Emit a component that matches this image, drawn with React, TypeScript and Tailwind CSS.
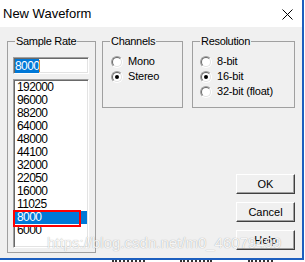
const rates = ["192000", "96000", "88200", "64000", "48000", "44100", "32000", "22050", "16000", "11025", "8000", "6000"];

function Radio({ checked }: { checked?: boolean }) {
  return (
    <span className="flex h-[12px] w-[12px] shrink-0 rounded-full border border-t-[#a0a0a0] border-l-[#a0a0a0] border-b-white border-r-white">
      <span className="flex flex-1 items-center justify-center rounded-full border border-t-[#696969] border-l-[#696969] border-b-[#e3e3e3] border-r-[#e3e3e3] bg-white">
        {checked && <span className="h-[4px] w-[4px] rounded-full bg-black" />}
      </span>
    </span>
  );
}

function Group({ title, className, children }: { title: string; className: string; children: React.ReactNode }) {
  return (
    <fieldset className={`min-w-0 border border-[#a0a0a0] ${className}`}>
      <legend className="ml-[7px] bg-[#f0f0f0] px-[1px] text-[11px] leading-[14px] tracking-[-0.3px]">{title}</legend>
      {children}
    </fieldset>
  );
}

function Option({ label, checked }: { label: string; checked?: boolean }) {
  return (
    <div className="flex h-[15px] items-center gap-[5px] text-[11px] tracking-[-0.2px]">
      <Radio checked={checked} />
      <span>{label}</span>
    </div>
  );
}

function Button({ label }: { label: string }) {
  return (
    <button className="flex h-[20px] w-[59px] items-center justify-center border border-t-white border-l-white border-b-[#404040] border-r-[#404040] bg-[#f0f0f0] text-[11px] shadow-[inset_-1px_-1px_0_#a0a0a0]">
      {label}
    </button>
  );
}

export default function App() {
  return (
    <div className="relative h-[262px] w-[305px] overflow-hidden bg-white font-['Liberation_Sans',Arial,sans-serif] text-black">
      <div className="w-[304px] border-r-2 border-b-2 border-[#1d5fbf]">
        <div className="flex h-[27px] items-center justify-between bg-white pl-[3px] pr-[9px]">
          <span className="text-[13px]">New Waveform</span>
          <svg width="11" height="11" viewBox="0 0 11 11" className="mt-[1px]">
            <path d="M0.5 0.5L10.5 10.5M10.5 0.5L0.5 10.5" stroke="#000" strokeWidth="1" />
          </svg>
        </div>

        <div className="flex h-[231px] gap-[6px] bg-[#f0f0f0] pl-[7px] pt-[7px]">
          <Group title="Sample Rate" className="h-[219px] w-[89px]">
            <div className="px-[5px] pt-[9px]">
              <div className="flex h-[17px] w-[76px] items-center border border-t-[#a0a0a0] border-l-[#a0a0a0] border-b-white border-r-white bg-white pl-[1px] shadow-[inset_1px_1px_0_#696969,inset_-1px_-1px_0_#e3e3e3]">
                <span className="bg-[#0078d7] text-[12px] leading-[14px] tracking-[-0.6px] text-white">8000</span>
                <span className="h-[12px] w-[1px] bg-[#e88a2c]" />
              </div>
              <div className="relative mt-[5px] h-[169px] w-[76px] border border-t-[#a0a0a0] border-l-[#a0a0a0] border-b-white border-r-white bg-white p-[1px] shadow-[inset_1px_1px_0_#696969,inset_-1px_-1px_0_#e3e3e3]">
                {rates.map((r, i) => (
                  <div
                    key={r}
                    className={`h-[13px] pl-[2px] text-[12px] leading-[13px] tracking-[-0.6px] ${i === 10 ? "bg-[#0078d7] text-white" : ""}`}
                  >
                    {r}
                  </div>
                ))}
                <div className="absolute left-[-1px] top-[130px] h-[17px] w-[68px] border-2 border-[#ff0000]" />
              </div>
            </div>
          </Group>

          <div className="flex w-[193px] flex-col">
            <div className="flex gap-[9px]">
              <Group title="Channels" className="h-[74px] w-[81px]">
                <div className="pl-[8px] pt-[6px]">
                  <Option label="Mono" />
                  <Option label="Stereo" checked />
                </div>
              </Group>
              <Group title="Resolution" className="h-[74px] w-[103px]">
                <div className="pl-[7px] pt-[6px]">
                  <Option label="8-bit" />
                  <Option label="16-bit" checked />
                  <Option label="32-bit (float)" />
                </div>
              </Group>
            </div>
            <div className="mt-[66px] flex flex-col gap-[8px] self-end">
              <Button label="OK" />
              <Button label="Cancel" />
              <Button label="Help" />
            </div>
          </div>
        </div>
      </div>

      <div className="flex h-[2px]">
        <span className="ml-[112px] w-[33px] border-t-2 border-dotted border-[#333]" />
        <span className="ml-[35px] w-[32px] border-t-2 border-dotted border-[#333]" />
        <span className="ml-[36px] w-[25px] border-t-2 border-dotted border-[#333]" />
      </div>

      <div className="pointer-events-none absolute left-[47px] top-[234px] text-[15px] leading-[18px] text-white/90 [text-shadow:0_0_1px_rgba(0,0,0,0.4)]">
        https://blog.csdn.net/m0_46079499
      </div>
    </div>
  );
}
